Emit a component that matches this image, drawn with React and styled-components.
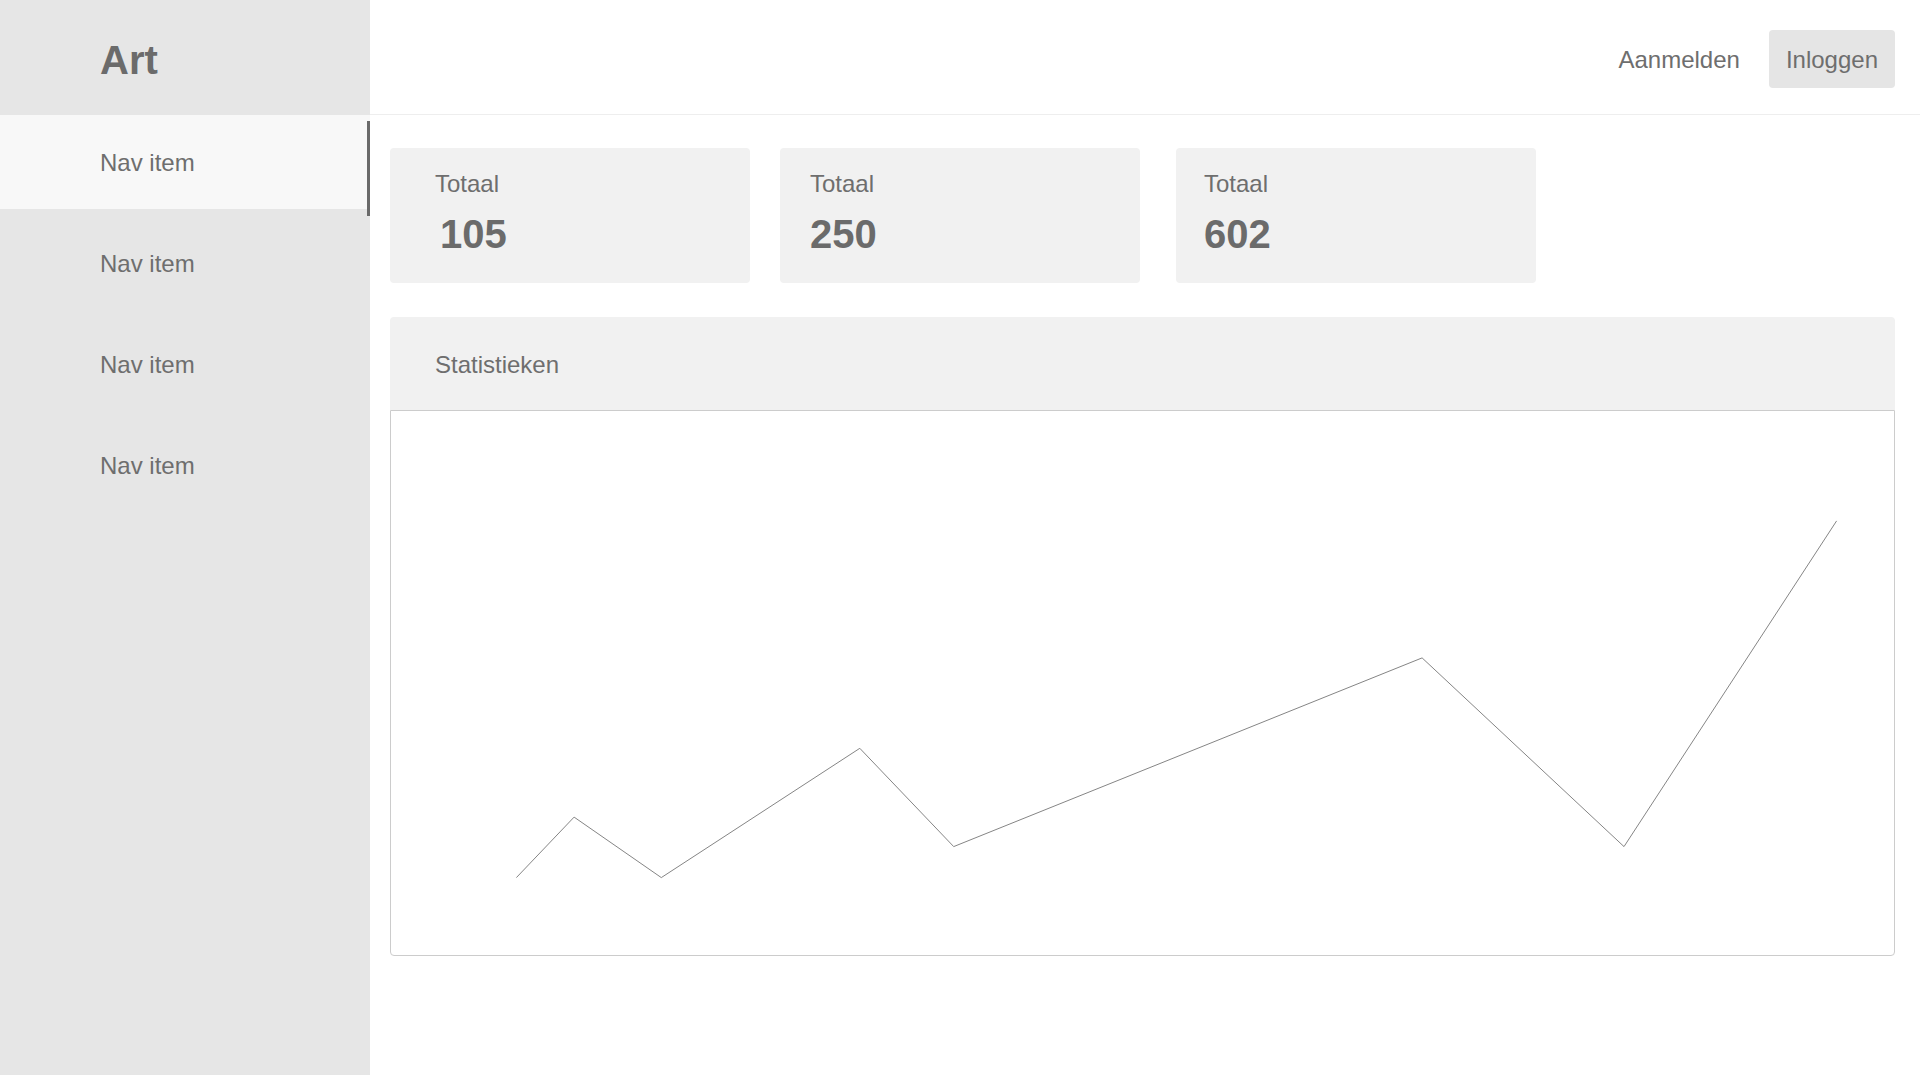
import React from "react";
import styled, { createGlobalStyle } from "styled-components";

const GlobalStyle = createGlobalStyle`
  html, body {
    margin: 0;
    padding: 0;
    background: #ffffff;
  }
  body {
    font-family: "Liberation Sans", Arial, Helvetica, sans-serif;
    color: #6e6e6e;
  }
  * { box-sizing: border-box; }
`;

const Shell = styled.div`
  display: flex;
  min-height: 100vh;
`;

const Sidebar = styled.aside`
  width: 370px;
  flex: 0 0 370px;
  background: #e6e6e6;
  display: flex;
  flex-direction: column;
`;

const Brand = styled.div`
  height: 115px;
  display: flex;
  align-items: center;
  padding-left: 100px;
  padding-top: 6px;
  font-size: 40px;
  font-weight: 700;
  color: #6b6b6b;
`;

const Nav = styled.nav`
  display: flex;
  flex-direction: column;
  gap: 7px;
`;

const NavItem = styled.a`
  position: relative;
  height: 94px;
  display: flex;
  align-items: center;
  padding: 2px 0 0 100px;
  font-size: 24px;
  line-height: 28px;
  color: #6e6e6e;
  text-decoration: none;
  background: ${(p) => (p.$active ? "#f8f8f8" : "transparent")};

  &::after {
    content: "";
    display: ${(p) => (p.$active ? "block" : "none")};
    position: absolute;
    right: 0;
    top: 6px;
    width: 3px;
    height: 95px;
    background: #6a6a6a;
  }
`;

const Main = styled.main`
  flex: 1;
  display: flex;
  flex-direction: column;
  min-width: 0;
`;

const TopBar = styled.header`
  height: 115px;
  border-bottom: 1px solid #eeeeee;
  display: flex;
  justify-content: flex-end;
  align-items: flex-start;
  padding: 30px 25px 0 0;
  gap: 12px;
`;

const HeaderButton = styled.button`
  height: 58px;
  padding: 2px 17px 0;
  line-height: 56px;
  font-family: inherit;
  font-size: 24px;
  color: #6e6e6e;
  border: none;
  border-radius: 4px;
  background: ${(p) => (p.$filled ? "#e5e5e5" : "transparent")};
  cursor: pointer;
`;

const Content = styled.div`
  padding: 33px 25px 40px 20px;
  display: flex;
  flex-direction: column;
  gap: 34px;
`;

const CardRow = styled.div`
  display: flex;
  align-items: flex-start;
`;

const StatCard = styled.div`
  width: 360px;
  height: 135px;
  margin-left: ${(p) => p.$offset || 0}px;
  padding: 22px ${(p) => p.$pad}px 0;
  background: #f1f1f1;
  border-radius: 4px;
  display: flex;
  flex-direction: column;
`;

const CardLabel = styled.div`
  font-size: 24px;
  line-height: 28px;
  color: #6e6e6e;
`;

const CardValue = styled.div`
  margin-top: 13px;
  padding-left: ${(p) => p.$indent || 0}px;
  font-size: 40px;
  line-height: 46px;
  font-weight: 700;
  color: #6b6b6b;
`;

const Panel = styled.section`
  display: flex;
  flex-direction: column;
`;

const PanelHeader = styled.div`
  height: 93px;
  background: #f1f1f1;
  border-radius: 4px 4px 0 0;
  display: flex;
  align-items: center;
  padding: 2px 0 0 45px;
  font-size: 24px;
  line-height: 28px;
  color: #6e6e6e;
`;

const ChartBox = styled.div`
  height: 546px;
  border: 1px solid #cccccc;
  border-radius: 0 0 4px 4px;
  background: #ffffff;
`;

const ChartSvg = styled.svg`
  display: block;
  width: 100%;
  height: 100%;
`;

const navItems = ["Nav item", "Nav item", "Nav item", "Nav item"];

const stats = [
  { label: "Totaal", value: "105", pad: 45, offset: 0, indent: 5 },
  { label: "Totaal", value: "250", pad: 30, offset: 30, indent: 0 },
  { label: "Totaal", value: "602", pad: 28, offset: 36, indent: 0 },
];

const points = [
  [125.4, 466.6],
  [183.1, 406.1],
  [270.3, 466.6],
  [468.8, 337.3],
  [562.7, 435.6],
  [1031.1, 246.9],
  [1233, 435.6],
  [1445.6, 109.9],
];

export default function App() {
  return (
    <>
      <GlobalStyle />
      <Shell>
        <Sidebar>
          <Brand>Art</Brand>
          <Nav>
            {navItems.map((item, i) => (
              <NavItem key={i} $active={i === 0}>
                {item}
              </NavItem>
            ))}
          </Nav>
        </Sidebar>
        <Main>
          <TopBar>
            <HeaderButton>Aanmelden</HeaderButton>
            <HeaderButton $filled>Inloggen</HeaderButton>
          </TopBar>
          <Content>
            <CardRow>
              {stats.map((s, i) => (
                <StatCard key={i} $pad={s.pad} $offset={s.offset}>
                  <CardLabel>{s.label}</CardLabel>
                  <CardValue $indent={s.indent}>{s.value}</CardValue>
                </StatCard>
              ))}
            </CardRow>
            <Panel>
              <PanelHeader>Statistieken</PanelHeader>
              <ChartBox>
                <ChartSvg viewBox="0 0 1503 544" preserveAspectRatio="none">
                  <polyline
                    points={points.map((p) => p.join(",")).join(" ")}
                    fill="none"
                    stroke="#858585"
                    strokeWidth="1"
                  />
                </ChartSvg>
              </ChartBox>
            </Panel>
          </Content>
        </Main>
      </Shell>
    </>
  );
}
